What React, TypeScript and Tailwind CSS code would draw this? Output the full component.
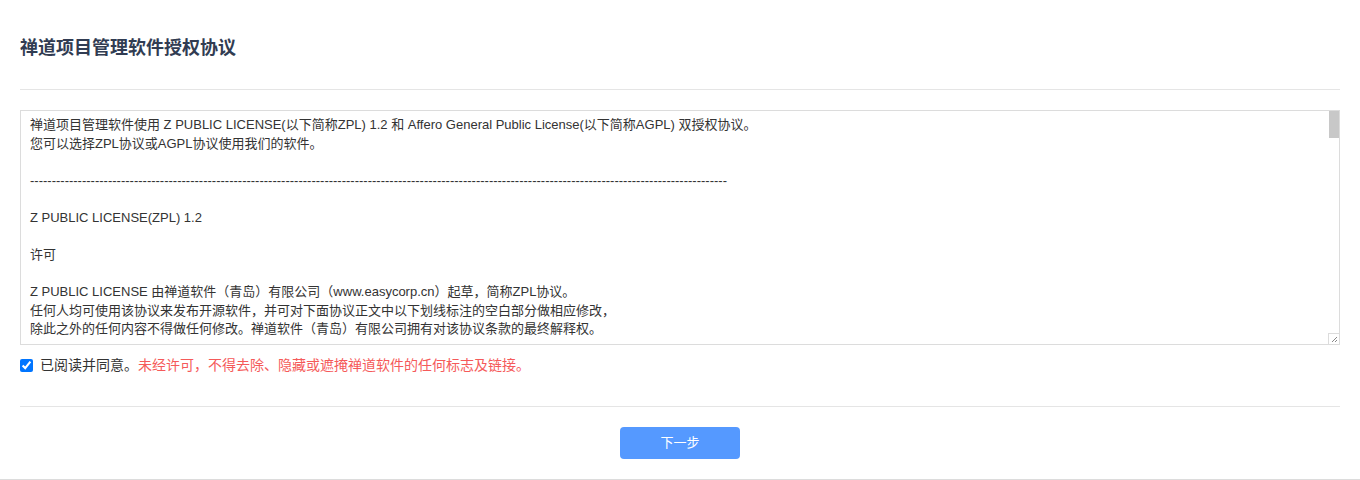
import React from "react";

const dashes = "-".repeat(161);

const license = [
  "禅道项目管理软件使用 Z PUBLIC LICENSE(以下简称ZPL) 1.2 和 Affero General Public License(以下简称AGPL) 双授权协议。",
  "您可以选择ZPL协议或AGPL协议使用我们的软件。",
  "",
  dashes,
  "",
  "Z PUBLIC LICENSE(ZPL) 1.2",
  "",
  "许可",
  "",
  "Z PUBLIC LICENSE 由禅道软件（青岛）有限公司（www.easycorp.cn）起草，简称ZPL协议。",
  "任何人均可使用该协议来发布开源软件，并可对下面协议正文中以下划线标注的空白部分做相应修改，",
  "除此之外的任何内容不得做任何修改。禅道软件（青岛）有限公司拥有对该协议条款的最终解释权。",
  "",
  "协议正文",
  "",
  "一、版权所有",
  "禅道项目管理软件由禅道软件（青岛）有限公司（以下简称“授权方”）开发，其版权归授权方所有。",
  "",
  "二、授权许可",
  "1. 用户可以在遵守本协议条款的前提下，免费获得、使用、复制、修改和分发本软件。",
  "2. 用户可以基于本软件进行二次开发，并可以将修改后的软件用于商业或非商业目的。",
  "3. 用户分发本软件或其修改版本时，必须同时附带本协议的完整文本。",
  "",
  "三、限制与约束",
  "1. 用户不得去除、隐藏或遮掩本软件中的任何标志及链接，包括但不限于软件名称、版权声明和官方网站链接。",
  "2. 用户不得以本软件为基础开发与本软件形成竞争关系的产品。",
  "3. 用户不得将本软件或其修改版本以另行命名的方式重新发布。",
  "4. 用户如需去除本软件中的标志及链接，必须获得授权方的书面商业授权。",
  "",
  "四、免责声明",
  "1. 本软件按“现状”提供，授权方不对本软件作任何明示或暗示的担保。",
  "2. 用户使用本软件的风险由用户自行承担，授权方不承担任何由此产生的直接或间接损失。",
  "",
  "五、协议的终止",
  "1. 如果用户违反本协议的任何条款，本协议授予的权利将自动终止。",
  "2. 协议终止后，用户必须停止使用并销毁本软件的全部副本。",
  "",
  "六、其他",
  "1. 本协议的解释、效力及纠纷的解决，适用于中华人民共和国法律。",
  "2. 若用户与授权方之间发生任何纠纷或争议，首先应友好协商解决。",
  "",
  dashes,
  "",
  "GNU AFFERO GENERAL PUBLIC LICENSE",
  "Version 3, 19 November 2007",
  "",
  "Copyright (C) 2007 Free Software Foundation, Inc. <https://fsf.org/>",
  "Everyone is permitted to copy and distribute verbatim copies",
  "of this license document, but changing it is not allowed.",
  "",
  "Preamble",
  "",
  "The GNU Affero General Public License is a free, copyleft license for",
  "software and other kinds of works, specifically designed to ensure",
  "cooperation with the community in the case of network server software.",
  "",
  "TERMS AND CONDITIONS",
  "",
  "0. Definitions.",
  "",
  "\"This License\" refers to version 3 of the GNU Affero General Public License.",
].join("\n");

export default function App() {
  return (
    <div
      className="w-full h-[480px] bg-white border-b border-[#dcdcdc] text-[#333] flex flex-col"
      style={{ fontFamily: '"Liberation Sans", Arial, "Noto Sans CJK SC", sans-serif' }}
    >
      <div className="h-[89px] px-5 pt-[38px] shrink-0">
        <h1 className="text-[18px] leading-[20px] font-bold text-[#313c52]">禅道项目管理软件授权协议</h1>
      </div>
      <div className="mx-5 h-px bg-[#e5e5e5] shrink-0" />
      <div className="px-5 pt-5 shrink-0">
        <div className="relative">
          <textarea
            readOnly
            value={license}
            className="block w-full h-[235px] border border-[#dcdcdc] bg-white text-[13px] leading-[1.42857] text-[#333] py-[5px] pl-[9px] pr-[14px] outline-none resize-y overflow-y-auto whitespace-pre-wrap [scrollbar-width:none]"
          />
          <div className="pointer-events-none absolute top-px right-px w-[10px] h-[27px] bg-[#c8c8c8]" />
          <div className="pointer-events-none absolute bottom-px right-px w-[11px] h-[11px] border-l border-t border-[#dcdcdc] bg-white flex items-end justify-end p-[2px]">
            <svg width="5" height="5" viewBox="0 0 5 5">
              <rect x="4" y="0" width="1" height="1" fill="#888" />
              <rect x="3" y="1" width="1" height="1" fill="#888" />
              <rect x="2" y="2" width="1" height="1" fill="#888" />
              <rect x="1" y="3" width="1" height="1" fill="#888" />
              <rect x="0" y="4" width="1" height="1" fill="#888" />
              <rect x="4" y="3" width="1" height="1" fill="#888" />
              <rect x="3" y="4" width="1" height="1" fill="#888" />
            </svg>
          </div>
        </div>
      </div>
      <div className="px-5 mt-[10px] h-5 flex items-center shrink-0 text-[14px]">
        <input type="checkbox" defaultChecked className="m-0 w-[13px] h-[13px]" />
        <span className="ml-[7px] text-[#333]">已阅读并同意。</span>
        <span className="text-[#f55a5a]">未经许可，不得去除、隐藏或遮掩禅道软件的任何标志及链接。</span>
      </div>
      <div className="mx-5 mt-[31px] h-px bg-[#e5e5e5] shrink-0" />
      <div className="flex justify-center pt-5 shrink-0">
        <button className="w-[120px] h-8 rounded-[4px] bg-[#5599ff] text-white text-[13px]">下一步</button>
      </div>
    </div>
  );
}
